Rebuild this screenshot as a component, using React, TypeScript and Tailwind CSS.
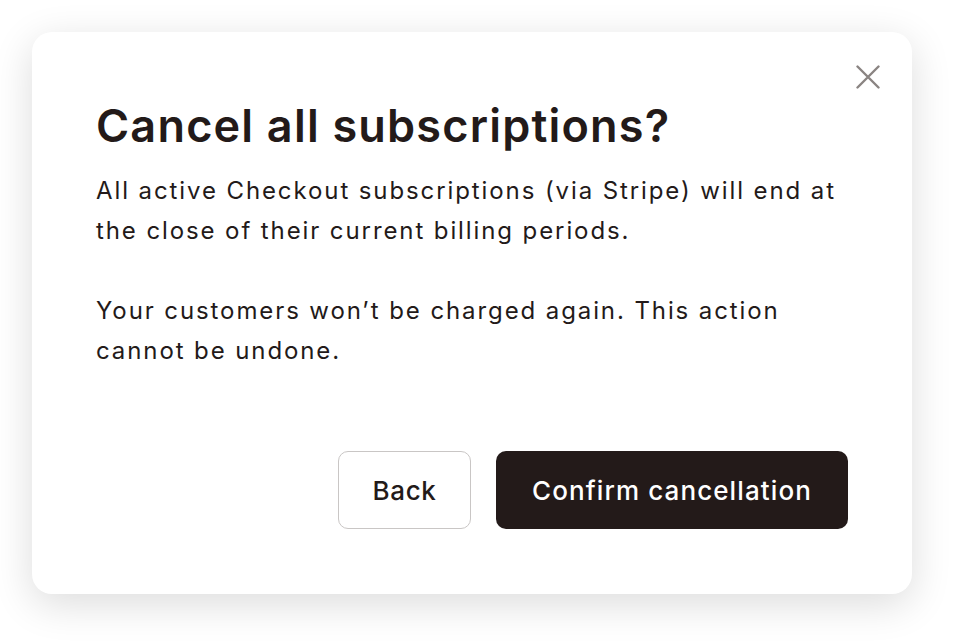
export default function App() {
  return (
    <div className="min-h-[642px] w-[960px] bg-white p-8 font-['Inter',sans-serif] text-[#231a19]">
      <div className="relative flex h-[562px] w-[880px] flex-col rounded-[20px] bg-white px-16 pt-[62px] pb-[65px] shadow-[0_10px_40px_rgba(0,0,0,0.14)]">
        <button className="absolute right-[32px] top-[33px] text-[#8a8482]">
          <svg width="24" height="24" viewBox="0 0 24 24" fill="none" stroke="currentColor" strokeWidth="2.4" strokeLinecap="round">
            <path d="M1.5 1.5 22.5 22.5M22.5 1.5 1.5 22.5" />
          </svg>
        </button>
        <h1 className="text-[45px] leading-[64px] font-semibold tracking-[1.2px]">
          Cancel all subscriptions?
        </h1>
        <div className="mt-[13px] text-[24px] leading-[40px] tracking-[1.9px]">
          <p>
            All active Checkout subscriptions (via Stripe) will end at
            <br />
            the close of their current billing periods.
          </p>
          <p className="mt-[40px]">
            Your customers won’t be charged again. This action
            <br />
            cannot be undone.
          </p>
        </div>
        <div className="mt-auto flex justify-end gap-[25px]">
          <button className="h-[78px] w-[133px] rounded-[10px] border-[1.5px] border-[#c9c6c5] text-[26px] font-medium tracking-[0.6px]">
            Back
          </button>
          <button className="h-[78px] w-[352px] rounded-[10px] bg-[#231a19] text-[26px] font-medium tracking-[1.1px] text-white">
            Confirm cancellation
          </button>
        </div>
      </div>
    </div>
  );
}
